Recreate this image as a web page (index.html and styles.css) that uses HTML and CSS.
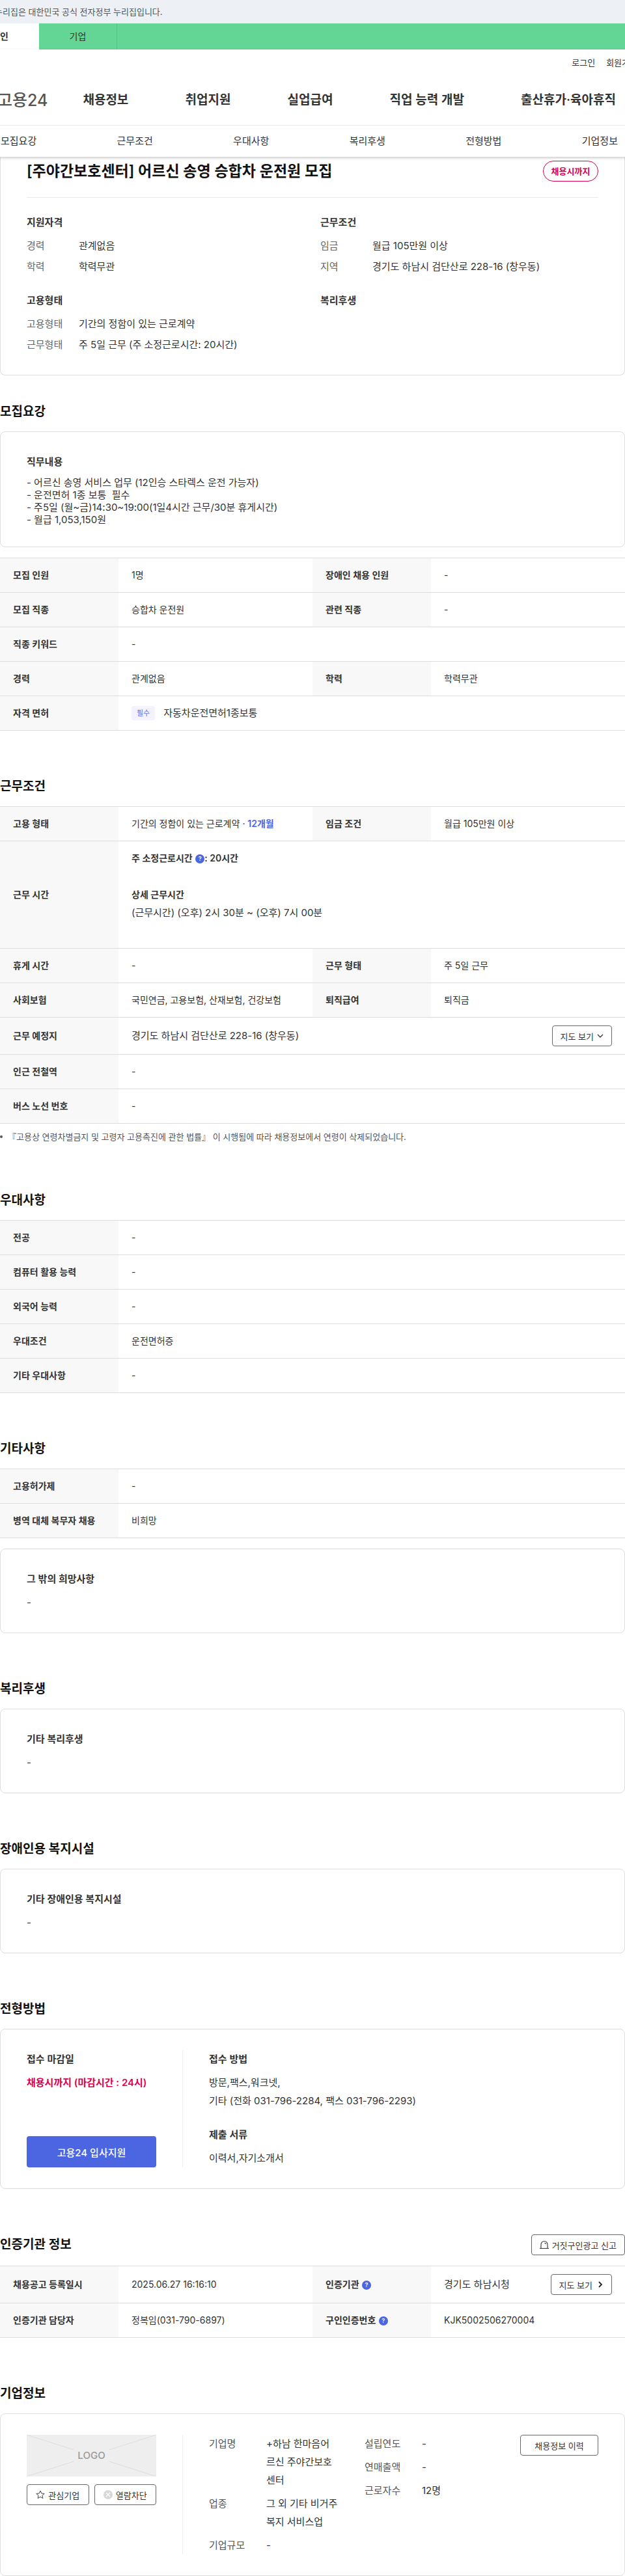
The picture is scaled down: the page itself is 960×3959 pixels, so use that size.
FILE: index.html
```html
<!DOCTYPE html>
<html lang="ko">
<head>
    <meta charset="UTF-8">
    <meta name="viewport" content="width=device-width, initial-scale=1.0">
    <title>고용24 채용정보</title>
    <link rel="stylesheet" href="styles.css">
</head>
<body>
    <div class="gov-bar"><p>누리집은 대한민국 공식 전자정부 누리집입니다.</p></div>
    <div class="user-tabs">
        <a href="#" class="active">개인</a>
        <a href="#">기업</a>
    </div>

    <header class="header">
        <div class="util"><a href="#">로그인</a><a href="#">회원가입</a></div>
        <div class="main-nav">
            <a href="#" class="logo">고용24</a>
            <nav class="gnb">
                <a href="#">채용정보</a>
                <a href="#">취업지원</a>
                <a href="#">실업급여</a>
                <a href="#">직업 능력 개발</a>
                <a href="#">출산휴가·육아휴직</a>
            </nav>
        </div>
        <nav class="anchor-nav">
            <a href="#recruit">모집요강</a>
            <a href="#work">근무조건</a>
            <a href="#prefer">우대사항</a>
            <a href="#welfare">복리후생</a>
            <a href="#apply">전형방법</a>
            <a href="#company">기업정보</a>
        </nav>
    </header>

    <main>
        <div class="card summary">
            <div class="summary-title">
                <h1>[주야간보호센터] 어르신 송영 승합차 운전원 모집</h1>
                <span class="due">채용시까지</span>
            </div>
            <div class="summary-grid">
                <div>
                    <h3>지원자격</h3>
                    <dl class="info">
                        <div><dt>경력</dt><dd>관계없음</dd></div>
                        <div><dt>학력</dt><dd>학력무관</dd></div>
                    </dl>
                </div>
                <div>
                    <h3>근무조건</h3>
                    <dl class="info">
                        <div><dt>임금</dt><dd>월급 105만원 이상</dd></div>
                        <div><dt>지역</dt><dd>경기도 하남시 검단산로 228-16 (창우동)</dd></div>
                    </dl>
                </div>
                <div>
                    <h3>고용형태</h3>
                    <dl class="info">
                        <div><dt>고용형태</dt><dd>기간의 정함이 있는 근로계약</dd></div>
                        <div><dt>근무형태</dt><dd>주 5일 근무 (주 소정근로시간: 20시간)</dd></div>
                    </dl>
                </div>
                <div>
                    <h3>복리후생</h3>
                </div>
            </div>
        </div>

        <section class="first" id="recruit">
            <h2>모집요강</h2>
            <div class="card">
                <h3>직무내용</h3>
                <p class="job-desc">- 어르신 송영 서비스 업무 (12인승 스타렉스 운전 가능자)
- 운전면허 1종 보통  필수
- 주5일 (월~금)14:30~19:00(1일4시간 근무/30분 휴게시간)
- 월급 1,053,150원</p>
            </div>
            <table>
                <colgroup><col class="col-th"><col><col class="col-th"><col></colgroup>
                <tr><th>모집 인원</th><td>1명</td><th>장애인 채용 인원</th><td>-</td></tr>
                <tr><th>모집 직종</th><td>승합차 운전원</td><th>관련 직종</th><td>-</td></tr>
                <tr><th>직종 키워드</th><td colspan="3">-</td></tr>
                <tr><th>경력</th><td>관계없음</td><th>학력</th><td>학력무관</td></tr>
                <tr><th>자격 면허</th><td colspan="3"><div class="license"><span class="tag">필수</span><span class="text-lg">자동차운전면허1종보통</span></div></td></tr>
            </table>
        </section>

        <section id="work">
            <h2>근무조건</h2>
            <table>
                <colgroup><col class="col-th"><col><col class="col-th"><col></colgroup>
                <tr><th>고용 형태</th><td>기간의 정함이 있는 근로계약 <strong class="blue">· 12개월</strong></td><th>임금 조건</th><td>월급 105만원 이상</td></tr>
                <tr>
                    <th>근무 시간</th>
                    <td colspan="3">
                        <p class="week-hours">주 소정근로시간 <button type="button" class="help" aria-label="도움말">?</button>: 20시간</p>
                        <p class="hours-title">상세 근무시간</p>
                        <p class="hours text-lg">(근무시간) (오후) 2시 30분 ~ (오후) 7시 00분</p>
                    </td>
                </tr>
                <tr><th>휴게 시간</th><td>-</td><th>근무 형태</th><td>주 5일 근무</td></tr>
                <tr><th>사회보험</th><td>국민연금, 고용보험, 산재보험, 건강보험</td><th>퇴직급여</th><td>퇴직금</td></tr>
                <tr>
                    <th>근무 예정지</th>
                    <td colspan="3" class="has-btn">
                        <div class="place">
                            <span class="text-lg">경기도 하남시 검단산로 228-16 (창우동)</span>
                            <button type="button" class="btn">지도 보기
                                <svg width="10" height="10" viewBox="0 0 10 10"><path d="M1 3l4 4 4-4" fill="none" stroke="#333" stroke-width="1.3"/></svg>
                            </button>
                        </div>
                    </td>
                </tr>
                <tr><th>인근 전철역</th><td colspan="3">-</td></tr>
                <tr><th>버스 노선 번호</th><td colspan="3">-</td></tr>
            </table>
            <p class="note">『고용상 연령차별금지 및 고령자 고용촉진에 관한 법률』 이 시행됨에 따라 채용정보에서 연령이 삭제되었습니다.</p>
        </section>

        <section id="prefer">
            <h2>우대사항</h2>
            <table>
                <colgroup><col class="col-th"><col></colgroup>
                <tr><th>전공</th><td>-</td></tr>
                <tr><th>컴퓨터 활용 능력</th><td>-</td></tr>
                <tr><th>외국어 능력</th><td>-</td></tr>
                <tr><th>우대조건</th><td>운전면허증</td></tr>
                <tr><th>기타 우대사항</th><td>-</td></tr>
            </table>
        </section>

        <section>
            <h2>기타사항</h2>
            <table>
                <colgroup><col class="col-th"><col></colgroup>
                <tr><th>고용허가제</th><td>-</td></tr>
                <tr><th>병역 대체 복무자 채용</th><td>비희망</td></tr>
            </table>
            <div class="card">
                <h3>그 밖의 희망사항</h3>
                <p>-</p>
            </div>
        </section>

        <section id="welfare">
            <h2>복리후생</h2>
            <div class="card">
                <h3>기타 복리후생</h3>
                <p>-</p>
            </div>
        </section>

        <section>
            <h2>장애인용 복지시설</h2>
            <div class="card">
                <h3>기타 장애인용 복지시설</h3>
                <p>-</p>
            </div>
        </section>

        <section id="apply">
            <h2>전형방법</h2>
            <div class="card split">
                <div class="split-left apply-left">
                    <h3>접수 마감일</h3>
                    <p class="deadline">채용시까지 (마감시간 : 24시)</p>
                    <button type="button" class="btn-apply">고용24 입사지원</button>
                </div>
                <div class="split-right">
                    <h3>접수 방법</h3>
                    <p>방문,팩스,워크넷,<br>기타 (전화 031-796-2284, 팩스 031-796-2293)</p>
                    <h3 class="docs">제출 서류</h3>
                    <p>이력서,자기소개서</p>
                </div>
            </div>
        </section>

        <section>
            <div class="section-head">
                <h2>인증기관 정보</h2>
                <button type="button" class="btn">
                    <svg width="14" height="14" viewBox="0 0 14 14"><path d="M2 12V6.500a5 5 0 0 1 10 0V12M0 12.500h14M7.500 4a2.500 2.500 0 0 1 2 2" fill="none" stroke="#333" stroke-width="1.1"/></svg>
                    거짓구인광고 신고
                </button>
            </div>
            <table>
                <colgroup><col class="col-th"><col><col class="col-th"><col></colgroup>
                <tr>
                    <th>채용공고 등록일시</th><td>2025.06.27 16:16:10</td>
                    <th>인증기관 <button type="button" class="help" aria-label="도움말">?</button></th>
                    <td class="has-btn">
                        <div class="place">
                            <span class="text-lg">경기도 하남시청</span>
                            <button type="button" class="btn">지도 보기
                                <svg width="12" height="12" viewBox="0 0 12 12"><path d="M5 2l4 4-4 4" fill="none" stroke="#222" stroke-width="1.800"/></svg>
                            </button>
                        </div>
                    </td>
                </tr>
                <tr>
                    <th>인증기관 담당자</th><td>정복임(031-790-6897)</td>
                    <th>구인인증번호 <button type="button" class="help" aria-label="도움말">?</button></th><td>KJK5002506270004</td>
                </tr>
            </table>
        </section>

        <section id="company">
            <h2>기업정보</h2>
            <div class="card split">
                <div class="split-left">
                    <div class="logo-box">
                        <svg viewBox="0 0 199 64" preserveAspectRatio="none"><path d="M0 0l72 23M199 0l-72 23M0 64l72-23M199 64l-72-23" fill="none" stroke="#ddd"/></svg>
                        <span>LOGO</span>
                    </div>
                    <div class="company-btns">
                        <button type="button" class="btn">
                            <svg width="14" height="14" viewBox="0 0 14 14"><path d="M7 1l1.800 4 4.400.4-3.300 2.900 1 4.300L7 10.400l-3.900 2.200 1-4.300L.8 5.400 5.200 5z" fill="none" stroke="#444" stroke-linejoin="round"/></svg>
                            관심기업
                        </button>
                        <button type="button" class="btn">
                            <svg width="14" height="14" viewBox="0 0 14 14"><circle cx="7" cy="7" r="7" fill="#d8d8d8"/><path d="M4 4l6 6M10 4l-6 6" stroke="#fff" stroke-width="1.200"/></svg>
                            열람차단
                        </button>
                    </div>
                </div>
                <div class="split-right company">
                    <dl class="company-info">
                        <div><dt>기업명</dt><dd>+하남 한마음어<br>르신 주야간보호<br>센터</dd></div>
                        <div><dt>업종</dt><dd>그 외 기타 비거주<br>복지 서비스업</dd></div>
                        <div><dt>기업규모</dt><dd>-</dd></div>
                    </dl>
                    <dl class="company-info">
                        <div><dt>설립연도</dt><dd>-</dd></div>
                        <div><dt>연매출액</dt><dd>-</dd></div>
                        <div><dt>근로자수</dt><dd>12명</dd></div>
                    </dl>
                    <button type="button" class="btn history">채용정보 이력</button>
                </div>
            </div>
        </section>
    </main>
</body>
</html>
```
FILE: styles.css
```css
* {
    box-sizing: border-box;
    margin: 0;
    padding: 0;
}
body {
    font-family: Inter, "Noto Sans CJK KR", sans-serif;
    font-size: 15px;
    line-height: 28px;
    color: #333;
    background: #fff;
    overflow-x: hidden;
}
a {
    color: inherit;
    text-decoration: none;
}
button {
    font-family: inherit;
    color: inherit;
    cursor: pointer;
}

/* top bars */
.gov-bar {
    background: #edf1f6;
    font-size: 13px;
    line-height: 36px;
    color: #555;
    white-space: nowrap;
    overflow: hidden;
}
.gov-bar p {
    margin-left: -8px;
}
.user-tabs {
    display: flex;
    background: #63d594;
    overflow: hidden;
}
.user-tabs a {
    width: 120px;
    font-size: 14px;
    line-height: 40px;
    text-align: center;
    border-right: 1px solid #57c486;
}
.user-tabs .active {
    margin-left: -60px;
    background: #fff;
    border: 0;
    font-weight: 600;
}

/* header */
.header {
    position: relative;
    background: #fff;
    box-shadow: 0 2px 4px rgba(0, 0, 0, 0.2);
    white-space: nowrap;
    overflow-x: clip;
}
.util {
    display: flex;
    justify-content: flex-end;
    gap: 17px;
    font-size: 13px;
    line-height: 40px;
    margin-right: -19px;
}
.main-nav {
    display: flex;
    align-items: center;
    height: 76px;
    border-bottom: 1px solid #ebebeb;
    box-sizing: content-box;
}
.logo {
    font-size: 25px;
    font-weight: 500;
    color: #555;
    margin-left: -4px;
}
.gnb {
    display: flex;
    flex: 1;
    justify-content: space-between;
    margin: 0 14px 0 54px;
    font-size: 19px;
    font-weight: 600;
}
.anchor-nav {
    display: flex;
    justify-content: space-between;
    padding: 0 11px 0 1px;
    line-height: 48px;
}

/* sections */
section {
    margin-top: 70px;
}
section.first {
    margin-top: 40px;
}
h2 {
    font-size: 19px;
    font-weight: 600;
    line-height: 32px;
    margin-bottom: 14px;
    color: #111;
}
h3 {
    font-size: 15px;
    font-weight: 600;
    line-height: 28px;
    margin-bottom: 8px;
}
.section-head {
    display: flex;
    align-items: center;
    justify-content: space-between;
    margin-bottom: 16px;
}
.section-head h2 {
    margin-bottom: 0;
}
.card {
    border: 1px solid #ddd;
    border-radius: 8px;
    padding: 32px 40px;
}
.card + table,
table + .card {
    margin-top: 16px;
}

/* summary */
.summary {
    border-top: 0;
    border-radius: 0 0 8px 8px;
    padding-top: 6px;
}
.summary-title {
    display: flex;
    align-items: center;
    justify-content: space-between;
    padding-bottom: 24px;
    border-bottom: 1px solid #eaeaea;
    margin-bottom: 24px;
}
.summary-title h1 {
    font-size: 23px;
    font-weight: 600;
    line-height: 32px;
    color: #111;
}
.due {
    width: 85px;
    border: 1px solid #dd0050;
    border-radius: 16px;
    font-size: 13px;
    font-weight: 600;
    line-height: 30px;
    text-align: center;
    color: #dd0050;
}
.summary-grid {
    display: grid;
    grid-template-columns: 1fr 1fr;
    gap: 24px;
}
.info {
    display: grid;
    gap: 4px;
}
.info div {
    display: flex;
}
.info dt {
    width: 80px;
    color: #666;
}
.job-desc {
    line-height: 19px;
    white-space: pre-wrap;
}

/* tables */
table {
    width: 100%;
    border-collapse: collapse;
    table-layout: fixed;
    font-size: 14px;
    line-height: 24px;
}
.col-th {
    width: 182px;
}
th,
td {
    padding: 14px 20px;
    border-top: 1px solid #ddd;
    border-bottom: 1px solid #ddd;
    text-align: left;
}
th {
    background: #f8f8f8;
    font-weight: 600;
}
.has-btn {
    padding-top: 12px;
    padding-bottom: 12px;
}
.place,
.license {
    display: flex;
    align-items: center;
    justify-content: space-between;
}
.license {
    justify-content: flex-start;
    gap: 13px;
}
.text-lg {
    font-size: 15px;
}
.tag {
    padding: 0 8px;
    border-radius: 4px;
    background: #f2f3ff;
    font-size: 11px;
    line-height: 22px;
    color: #5f73e6;
}
.blue {
    font-weight: 600;
    color: #4c66e1;
}
.week-hours,
.hours-title {
    font-weight: 600;
}
.week-hours {
    margin-bottom: 32px;
}
.hours {
    margin: 4px 0 28px;
}
.help {
    width: 14px;
    height: 14px;
    margin-left: 1px;
    border: 0;
    border-radius: 50%;
    background: #4c66e1;
    color: #fff;
    font-size: 9px;
    font-weight: 600;
    line-height: 14px;
    text-align: center;
    vertical-align: middle;
}
.note {
    display: flex;
    align-items: center;
    gap: 8px;
    margin-top: 8px;
    font-size: 13px;
    line-height: 24px;
    color: #555;
}
.note::before {
    content: "";
    width: 4px;
    height: 4px;
    border-radius: 50%;
    background: #555;
}

/* buttons */
.btn {
    display: flex;
    align-items: center;
    justify-content: center;
    gap: 5px;
    height: 32px;
    padding: 0 12px;
    border: 1px solid #666;
    border-radius: 4px;
    background: #fff;
    font-size: 13px;
    white-space: nowrap;
}
.btn-apply {
    width: 100%;
    height: 48px;
    margin-top: auto;
    border: 0;
    border-radius: 4px;
    background: #4c66e1;
    color: #fff;
    font-size: 15px;
    font-weight: 500;
}

/* two column cards */
.split {
    display: flex;
}
.split-left {
    width: 240px;
    padding-right: 40px;
    border-right: 1px solid #eee;
}
.apply-left {
    display: flex;
    flex-direction: column;
}
.split-right {
    flex: 1;
    padding-left: 40px;
}
.deadline {
    font-weight: 600;
    color: #dd0050;
    white-space: nowrap;
}
.docs {
    margin-top: 24px;
}
.logo-box {
    display: grid;
    height: 64px;
    place-items: center;
    background: #eee;
    margin-bottom: 12px;
    font-weight: 500;
    color: #999;
}
.logo-box svg,
.logo-box span {
    grid-area: 1 / 1;
}
.logo-box svg {
    width: 100%;
    height: 64px;
}
.company-btns {
    display: flex;
    gap: 8px;
}
.company-btns .btn {
    flex: 1;
    padding: 0;
}
.company {
    display: flex;
    align-items: flex-start;
}
.company-info {
    flex: 1;
    display: grid;
    gap: 8px;
    padding-right: 40px;
}
.company-info div {
    display: flex;
}
.company-info dt {
    flex: 0 0 88px;
    color: #555;
}
.company-info dd {
    word-break: keep-all;
    white-space: nowrap;
}
.history {
    width: 120px;
}
```
